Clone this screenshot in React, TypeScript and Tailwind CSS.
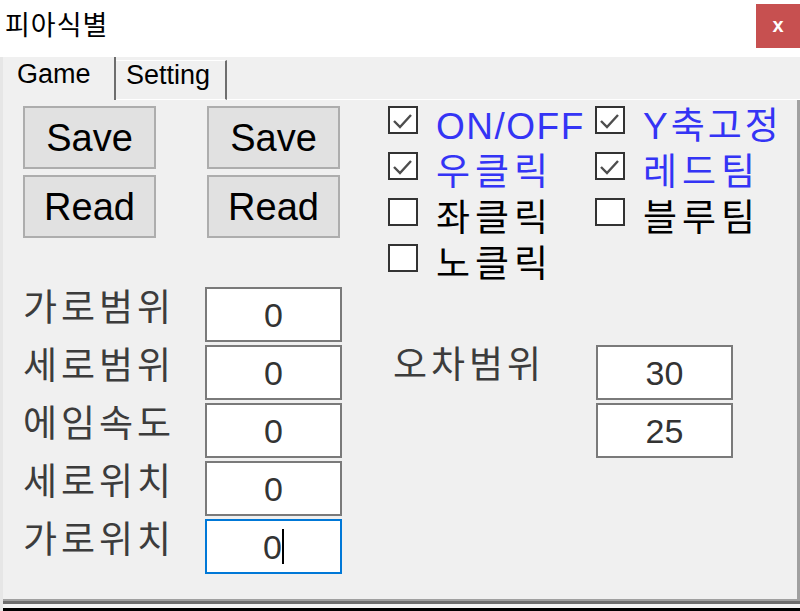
import { useState } from 'react';

interface CheckItem {
  label: string;
  checked: boolean;
  track: string;
}

const leftChecks: CheckItem[] = [
  { label: 'ON/OFF', checked: true, track: 'tracking-[1.5px]' },
  { label: '우클릭', checked: true, track: 'tracking-[5px]' },
  { label: '좌클릭', checked: false, track: 'tracking-[5px]' },
  { label: '노클릭', checked: false, track: 'tracking-[5px]' },
];

const rightChecks: CheckItem[] = [
  { label: 'Y축고정', checked: true, track: 'tracking-[3px]' },
  { label: '레드팀', checked: true, track: 'tracking-[5px]' },
  { label: '블루팀', checked: false, track: 'tracking-[5px]' },
];

const fields = ['가로범위', '세로범위', '에임속도', '세로위치', '가로위치'];

function CheckBox({ item, onToggle }: { item: CheckItem; onToggle: () => void }) {
  return (
    <div className="flex items-start h-[28px] cursor-default" onClick={onToggle}>
      <div className="w-[30px] h-[28px] shrink-0 border-2 border-[#333333] bg-white">
        {item.checked && (
          <svg viewBox="0 0 26 24" className="w-full h-full">
            <polyline points="4,13 10,19 21,7" fill="none" stroke="#4d4d4d" strokeWidth="2.4" />
          </svg>
        )}
      </div>
      <span
        className={
          'ml-[18px] mt-[2px] text-[37px] leading-none whitespace-nowrap ' +
          item.track +
          ' ' +
          (item.checked ? 'text-[#3434f5]' : 'text-black')
        }
      >
        {item.label}
      </span>
    </div>
  );
}

function ValueBox({ value, focused }: { value: string; focused?: boolean }) {
  return (
    <div
      className={
        'w-[137px] h-[55px] bg-white border-2 flex items-center justify-center text-[34px] leading-none text-[#333333] ' +
        (focused ? 'border-[#0078d7]' : 'border-[#7a7a7a]')
      }
    >
      <span>{value}</span>
      {focused && <span className="w-[2px] h-[35px] bg-black" />}
    </div>
  );
}

export default function App() {
  const [left, setLeft] = useState(leftChecks);
  const [right, setRight] = useState(rightChecks);

  const toggle = (list: CheckItem[], set: (l: CheckItem[]) => void, i: number) => {
    set(list.map((c, idx) => (idx === i ? { ...c, checked: !c.checked } : c)));
  };

  return (
    <div className="w-[800px] h-[611px] flex flex-col bg-[#f0f0f0] overflow-hidden font-['Liberation_Sans','Noto_Sans_CJK_KR',sans-serif] text-black">
      {/* title bar */}
      <div className="h-[57px] shrink-0 bg-white flex items-start">
        <span className="ml-[5px] mt-[13px] text-[27px] leading-none tracking-[1px]">피아식별</span>
        <button className="ml-auto mt-[4px] w-[44px] h-[44px] bg-[#c75050] text-white font-bold text-[20px] leading-none flex items-center justify-center pb-[2px]">
          x
        </button>
      </div>

      <div className="flex-1 flex flex-col border-l-[3px] border-l-[#e6e6e6]">
        {/* tabs */}
        <div className="h-[43px] shrink-0 flex text-[27px] leading-none">
          <div className="w-[113px] border-r-2 border-r-[#6e6e6e] pl-[14px] pt-[4px]">Game</div>
          <div className="w-[111px] mt-[3px] border-t border-t-white border-b border-b-white border-r-2 border-r-[#6e6e6e] pl-[10px] pt-[1px]">
            Setting
          </div>
          <div className="flex-1 border-b border-b-white" />
        </div>

        {/* panel */}
        <div className="flex-1 border-r-[3px] border-r-[#a0a0a0] border-b-2 border-b-[#a0a0a0] pt-[6px] pl-[20px]">
          <div className="flex items-start">
            <div className="grid grid-cols-[133px_133px] gap-x-[51px] gap-y-[6px]">
              {['Save', 'Save', 'Read', 'Read'].map((t, i) => (
                <button
                  key={i}
                  className="h-[63px] border-2 border-[#adadad] bg-[#e1e1e1] text-[38px] leading-none flex items-center justify-center"
                >
                  {t}
                </button>
              ))}
            </div>
            <div className="ml-[48px] flex">
              <div className="w-[207px] flex flex-col gap-y-[18px]">
                {left.map((c, i) => (
                  <CheckBox key={c.label} item={c} onToggle={() => toggle(left, setLeft, i)} />
                ))}
              </div>
              <div className="flex flex-col gap-y-[18px]">
                {right.map((c, i) => (
                  <CheckBox key={c.label} item={c} onToggle={() => toggle(right, setRight, i)} />
                ))}
              </div>
            </div>
          </div>

          <div className="flex items-start mt-[15px]">
            <div className="grid grid-cols-[182px_137px] gap-y-[3px]">
              {fields.map((f, i) => (
                <div key={f} className="contents">
                  <span className="mt-[3px] text-[37px] leading-none tracking-[4px] text-[#3c3c3c] whitespace-nowrap">{f}</span>
                  <ValueBox value="0" focused={i === fields.length - 1} />
                </div>
              ))}
            </div>
            <div className="ml-[51px] mt-[58px] grid grid-cols-[203px_137px] gap-y-[3px]">
              <span className="mt-[2px] text-[37px] leading-none tracking-[4px] text-[#3c3c3c] whitespace-nowrap">오차범위</span>
              <ValueBox value="30" />
              <span />
              <ValueBox value="25" />
            </div>
          </div>
        </div>
        <div className="h-[3px] shrink-0 bg-[#6d6d6d]" />
        <div className="h-[4px] shrink-0 bg-[#f4f4f4]" />
        <div className="h-[3px] shrink-0 bg-black" />
      </div>
    </div>
  );
}
